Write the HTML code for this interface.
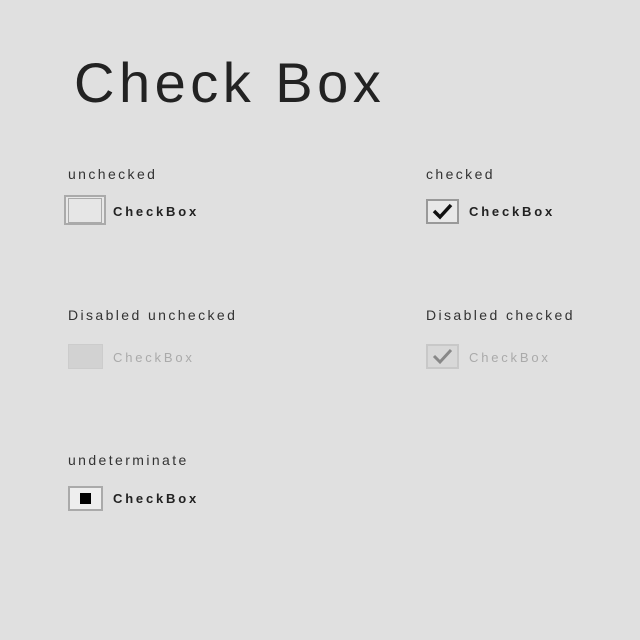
<!DOCTYPE html>
<html><head><style>
body{margin:0;width:640px;height:640px;background:#e0e0e0;font-family:"Liberation Sans",sans-serif;position:relative;overflow:hidden}
.t{position:absolute;left:74px;top:50px;font-size:56px;color:#222;letter-spacing:4.5px}
.l{position:absolute;font-size:14px;color:#333;letter-spacing:2.4px}
.b{position:absolute;box-sizing:border-box;border:2px solid #999;background:#e8e8e8}
.c{position:absolute;font-size:13px;font-weight:bold;color:#222;letter-spacing:2.8px}
.d{color:#aaa;font-weight:normal}
</style></head><body>
<div class="t">Check Box</div>
<div class="l" style="left:68px;top:166px">unchecked</div>
<div class="l" style="left:426px;top:166px">checked</div>
<div class="b" style="left:64px;top:195px;width:42px;height:30px;border:2px solid #aaa"></div>
<div class="b" style="left:68px;top:198px;width:34px;height:25px;border:1px solid #aaa;background:#e6e6e6"></div>
<div class="c" style="left:113px;top:204px">CheckBox</div>
<div class="b" style="left:426px;top:199px;width:33px;height:25px">
<svg width="29" height="21" viewBox="0 0 29 21"><path d="M6 10 L12 16 L23 4" fill="none" stroke="#111" stroke-width="3.5"/></svg></div>
<div class="c" style="left:469px;top:204px">CheckBox</div>
<div class="l" style="left:68px;top:307px">Disabled unchecked</div>
<div class="l" style="left:426px;top:307px">Disabled checked</div>
<div class="b" style="left:68px;top:344px;width:35px;height:25px;border:1px solid #ccc;background:#d2d2d2"></div>
<div class="c d" style="left:113px;top:350px">CheckBox</div>
<div class="b" style="left:426px;top:344px;width:33px;height:25px;border:2px solid #c8c8c8;background:#d8d8d8">
<svg width="29" height="21" viewBox="0 0 29 21"><path d="M6 10 L12 16 L23 4" fill="none" stroke="#888" stroke-width="3"/></svg></div>
<div class="c d" style="left:469px;top:350px">CheckBox</div>
<div class="l" style="left:68px;top:452px">undeterminate</div>
<div class="b" style="left:68px;top:486px;width:35px;height:25px;border:2px solid #aaa;background:#eee">
<div style="position:absolute;left:10px;top:5px;width:11px;height:11px;background:#000"></div></div>
<div class="c" style="left:113px;top:491px">CheckBox</div>
</body></html>
